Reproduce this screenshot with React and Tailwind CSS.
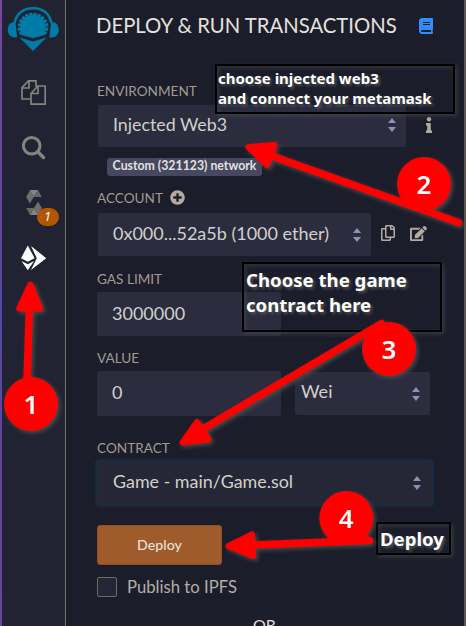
import React from 'react';
import { FaBook, FaInfo, FaPlusCircle, FaRegCopy, FaEdit } from 'react-icons/fa';

function Label({ children, className = '' }) {
  return (
    <div className={`flex h-5 items-center pb-px text-[13.600px] leading-5 text-[#a29a90] ${className}`}>
      {children}
    </div>
  );
}

function Sorter() {
  return (
    <svg width="8" height="14" viewBox="0 0 8 14" fill="#8c92b5" className="shrink-0">
      <path d="M4 0 8 5H0zM4 14 0 9h8z" />
    </svg>
  );
}

function Field({ children, className = '', sorter = false }) {
  return (
    <div className={`flex shrink-0 items-center justify-between rounded-[2px] text-[18px] leading-6 text-[#d3d0cb] ${className}`}>
      {children}
      {sorter && <Sorter />}
    </div>
  );
}

function Logo() {
  const teeth = Array.from({ length: 13 }, (_, i) => -108 + i * 18);
  return (
    <svg width="52" height="46" viewBox="7 6 52 46" className="shrink-0">
      <path d="M14.500 23C17 13 24 8.300 33 8.300S49 13 51.500 23" fill="none" stroke="#007aa6" strokeWidth="2.600" />
      <path d="M15.500 22.500 17.200 37.500c-5.500 .5-9.400-2-9.400-7.500S11 21.500 15.500 22.500zM51 22.500 49.300 37.500c5.500 .5 9.400-2 9.400-7.500S55.500 21.500 51 22.500z" fill="#007aa6" />
      <path d="M20.500 34.800C17 31 17.300 27 18 24c1.800-7 8-11.300 15-11.300S46.200 17 48 24c.7 3 1 7-2.500 10.800L33 38.300z" fill="#007aa6" />
      {teeth.map((a) => (
        <path key={a} d="M32.200 10.800h1.600l-.4 3.900h-.8z" fill="#222336" transform={`translate(33 27) scale(1.040 1) rotate(${a}) translate(-33 -27)`} />
      ))}
      <path d="m19.500 37.600 13.500 3.900 13.500-3.900L33 51z" fill="#007aa6" />
    </svg>
  );
}

function FilesIcon() {
  return (
    <svg width="26" height="26" viewBox="21 80 26 26" fill="none" stroke="#85837f" strokeWidth="1.700" strokeLinejoin="round" className="shrink-0">
      <path d="M30.500 99H22V87.500l6.500-6.700H36V87M22 88h7v-7" />
      <path d="M38 86h7.200v18.200H31V93.500L38 86v7.500h-7" />
    </svg>
  );
}

function SearchIcon() {
  return (
    <svg width="24" height="24" viewBox="22 136.500 24 24" fill="none" stroke="#85837f" strokeWidth="3" className="shrink-0">
      <circle cx="31.700" cy="146.300" r="8.300" />
      <path d="m38 152.500 5.500 5.500" strokeWidth="3.500" strokeLinecap="round" />
    </svg>
  );
}

function SolidityIcon() {
  return (
    <svg width="16" height="26" viewBox="25.500 190 16 26" className="shrink-0">
      <path d="m29.500 190-3.800 7 3.600 6.500 4-6.500z" fill="#6e6e6f" />
      <path d="M29.500 190h8l-4.200 7z" fill="#858585" />
      <path d="m37.500 190 3.800 7h-8z" fill="#686869" />
      <path d="m37.500 201.500 3.800 6.500-3.800 7-4-7z" fill="#6e6e6f" />
      <path d="M37.500 215h-8l4-7z" fill="#858585" />
      <path d="m29.500 215-3.800-7h7.800z" fill="#686869" />
    </svg>
  );
}

function RunIcon() {
  return (
    <svg width="26" height="26" viewBox="21 244.500 26 26" fill="#fff" className="shrink-0">
      <path d="m27.800 245 6.800 12.700-6.800 3.600-6.800-3.600zM21.500 260.500l6.300 3.300 6.300-3.300-6.300 9.200z" />
      <path d="m31 245.500 15.200 12.200L31 269.500l5.800-11.800z" />
    </svg>
  );
}

function Marker({ x, y, n }) {
  return (
    <g>
      <circle cx={x} cy={y} r="27" fill="#f00" />
      <text x={x} y={y + 9.500} textAnchor="middle" fill="#fff" className="font-['Noto_Sans',sans-serif] text-[26px] font-semibold">{n}</text>
    </g>
  );
}

function Arrow({ shaft, head }) {
  return (
    <g stroke="#f00" strokeLinecap="round" strokeLinejoin="round">
      <path d={shaft} fill="none" strokeWidth="7.500" />
      <path d={head} fill="#f00" strokeWidth="6" />
    </g>
  );
}

function Note({ className, children }) {
  return (
    <div className={`absolute border-[2.500px] border-black font-['Noto_Sans',sans-serif] font-bold whitespace-nowrap text-white shadow-[2px_2px_4px_#54545488,inset_2px_2px_4px_#54545466] [text-shadow:2px_2px_3px_#555] ${className}`}>
      {children}
    </div>
  );
}

export default function App() {
  return (
    <div className="relative flex h-[626px] w-[466px] overflow-hidden bg-[#1c1d2b] font-['Lato',sans-serif]">
      <div className="w-[2px] shrink-0 bg-linear-to-b from-[#7546a5] via-[#5845a3] to-[#6b439d]" />
      <aside className="flex w-[64px] shrink-0 flex-col items-center border-r border-[#77736f] bg-[#222332]">
        <div className="mt-[6px] mr-px h-[46px]"><Logo /></div>
        <div className="mt-[28px] h-[26px]"><FilesIcon /></div>
        <div className="mt-[30px] h-6"><SearchIcon /></div>
        <div className="relative mt-[30px] h-[26px]">
          <SolidityIcon />
          <span className="absolute top-[18px] left-[11px] flex h-[18px] w-[22px] items-center justify-center rounded-full bg-[#b15700] pb-px font-['Noto_Sans',sans-serif] text-[12px] italic text-white">1</span>
        </div>
        <div className="mt-[29px] h-[26px]"><RunIcon /></div>
      </aside>

      <main className="flex min-w-0 flex-1 flex-col border-r-2 border-[#62554f] pl-[31px] whitespace-nowrap">
        <header className="flex h-[51px] shrink-0 items-center justify-between pr-[30px] text-[20.300px] text-[#e4e2de]">
          <h1 className="-ml-px">DEPLOY &amp; RUN TRANSACTIONS</h1>
          <FaBook size={16} color="#2f8dff" />
        </header>

        <Label className="mt-[30px] mb-px text-[13.300px]">ENVIRONMENT</Label>
        <div className="mt-[3px] flex h-[42px] shrink-0 items-center gap-[15px] pl-px">
          <Field sorter className="h-[42px] w-[308px] bg-[#2b2d3f] pr-[10px] pb-[2px] pl-[15px]">
            <span className="pb-[3px] text-[17.800px]">Injected Web3</span>
          </Field>
          <FaInfo size={16} color="#b3aba1" className="mb-[3px]" />
        </div>
        <div className="mt-[11px] ml-[10px] flex h-[18px] w-[155px] shrink-0 items-center justify-center rounded-[3px] bg-[#46485f] pb-px text-[12.300px] font-bold text-[#e2e1df]">
          Custom (321123) network
        </div>

        <Label className="mt-3 gap-[7px]">
          <span>ACCOUNT</span>
          <FaPlusCircle size={15} color="#b3aba1" />
        </Label>
        <div className="mt-[5px] flex h-[43px] shrink-0 items-center pl-px text-[#b3aba1]">
          <Field sorter className="h-[43px] w-[273px] bg-[#2b2d3f] pr-[10px] pl-[15px]">
            <span className="pb-[3px]">0x000...52a5b (1000 ether)</span>
          </Field>
          <FaRegCopy size={16} className="mb-[3px] ml-[9px]" />
          <FaEdit size={17} className="mb-[3px] ml-[14px]" />
        </div>

        <Label className="mt-[13px]">GAS LIMIT</Label>
        <Field className="mt-[3px] h-[44px] w-[184px] bg-[#2b2d3f] pb-[2px] pl-[15px]">
          <span>3000000</span>
        </Field>

        <Label className="mt-3">VALUE</Label>
        <div className="mt-[3px] flex h-[45px] shrink-0 items-center gap-[14px]">
          <Field className="h-[45px] w-[184px] bg-[#2b2d3f] pb-[3px] pl-[15px]">
            <span>0</span>
          </Field>
          <Field sorter className="h-[43px] w-[135px] bg-[#2b2d3f] pr-[10px] pl-[6px]">
            <span className="pb-[5px]">Wei</span>
          </Field>
        </div>

        <Label className="mt-[22px]">CONTRACT</Label>
        <Field sorter className="mt-[3px] h-[44px] w-[335px] bg-[#262736] pr-[11px] pl-[16px] shadow-[0_0_3px_1px_#123c54]">
          <span className="pb-[4px] text-[17.900px]">Game - main/Game.sol</span>
        </Field>

        <button className="mt-5 h-10 w-[125px] shrink-0 rounded-[3px] border border-[#8a5129] bg-[#9f5b2b] pb-px text-[14.200px] font-medium text-[#e6e0d9]">
          Deploy
        </button>
        <label className="mt-3 flex h-5 shrink-0 items-center gap-[10px] text-[16.700px] text-[#b5aea5]">
          <span className="h-5 w-5 rounded-[2px] border border-[#716a63] bg-[#252635]" />
          <span className="pt-px">Publish to IPFS</span>
        </label>
        <div className="mt-[18px] ml-[156px] h-5 shrink-0 text-[16px] leading-5 text-[#e0deda]">OR</div>
      </main>

      <Note className="top-[64px] left-[215px] h-[50px] w-[240px] pt-[2px] pl-[1px] text-[15px] leading-5">
        choose injected web3<br />and connect your metamask
      </Note>
      <Note className="top-[262px] left-[242px] h-[70px] w-[200px] pt-[3px] pl-[2px] text-[18.600px] leading-[25px]">
        Choose the game<br />contract here
      </Note>
      <Note className="top-[522px] left-[376px] h-[33px] w-[75px] pt-px pl-[2px] text-[18.600px] leading-[28px]">
        Deploy
      </Note>

      <svg width="466" height="626" viewBox="0 0 466 626" className="pointer-events-none absolute inset-0 [filter:drop-shadow(2px_2px_2px_#4a4a4a)]">
        <Arrow shaft="M27 380 29.500 305" head="M30.300 284.500 19.200 308.500 40.200 308.500z" />
        <Arrow shaft="M458.500 222.500 272 156" head="M248.500 147 274.500 145 267 165z" />
        <Arrow shaft="M381.500 323.500 203 429" head="M182.500 442.500 197 422 208.500 439.500z" />
        <Arrow shaft="M369.500 540.500 250 545" head="M228.500 546 252 534.500 253 556z" />
        <Marker x={31} y={404} n="1" />
        <Marker x={424} y={184} n="2" />
        <Marker x={389} y={349} n="3" />
        <Marker x={346.300} y={518} n="4" />
      </svg>
    </div>
  );
}
